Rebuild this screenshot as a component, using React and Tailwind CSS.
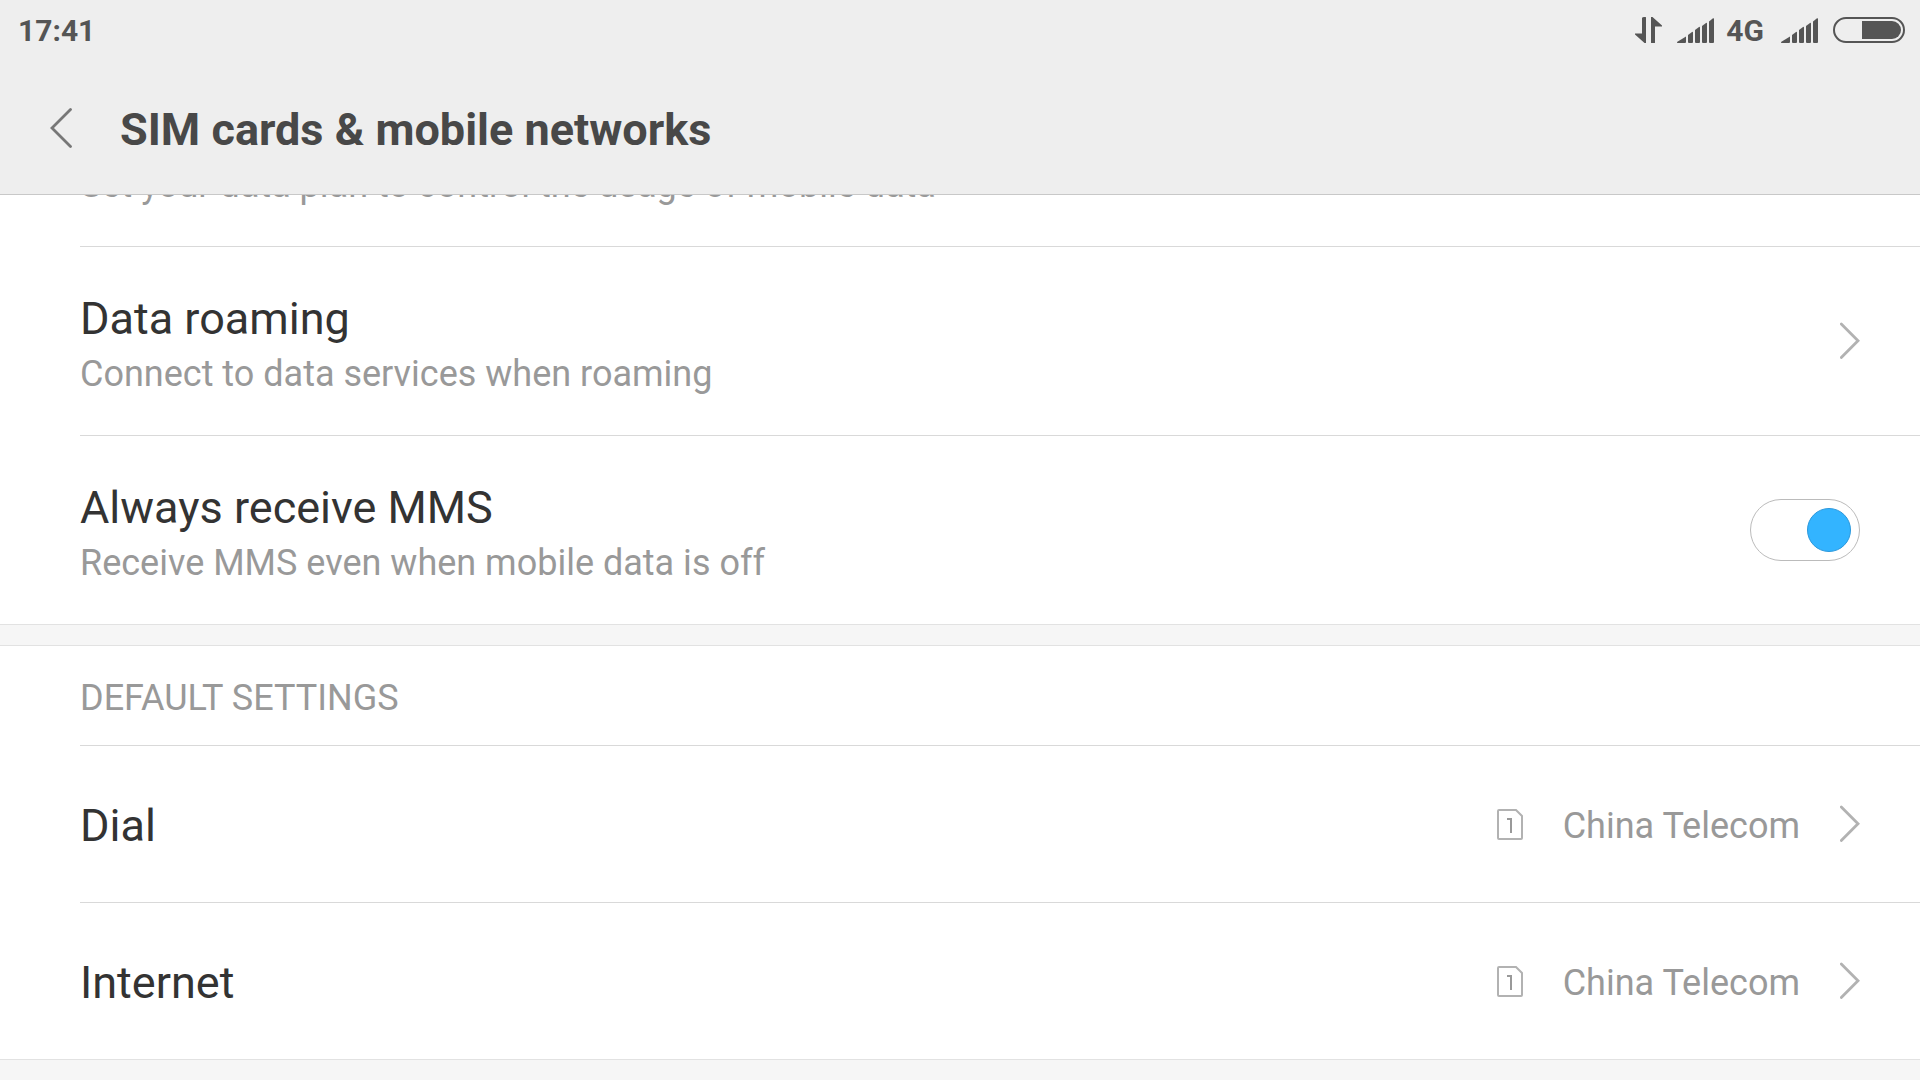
import React, { useState } from "react";

function DataArrows() {
  return (
    <svg viewBox="0 0 27 26" className="h-[26px] w-[27px] fill-[#555]" aria-hidden="true">
      <path d="M8 0.5Q8 0 8.500 0H10.500Q11 0 11 0.500V26H9.500L0 17.500V16.500H7V0.500Z" />
      <path d="M16 0H17.500L27 8.500V9.500H20V25.500Q20 26 19.500 26H16.500Q16 26 16 25.500Z" />
    </svg>
  );
}

function Signal() {
  return (
    <svg viewBox="0 0 37 25" className="h-[25px] w-[37px] fill-[#555]" aria-hidden="true">
      <path d="M0 24L9 18.500V24Q9 25 8 25H0.500Q0 25 0 24Z" />
      <path d="M11 17L15 14Q16 13.500 16 14.500V24Q16 25 15 25H12Q11 25 11 24Z" />
      <path d="M18 12L22 9Q23 8.500 23 9.500V24Q23 25 22 25H19Q18 25 18 24Z" />
      <path d="M25 8L29 5Q30 4.500 30 5.500V24Q30 25 29 25H26Q25 25 25 24Z" />
      <path d="M32 3.500L36 0.300Q37 0 37 1V24Q37 25 36 25H33Q32 25 32 24Z" />
    </svg>
  );
}

function Battery() {
  return (
    <svg viewBox="0 0 72 26" className="h-[26px] w-[72px]" aria-hidden="true">
      <rect x="1" y="1" width="70" height="24" rx="12" fill="none" stroke="#555" strokeWidth="2" />
      <path d="M29 4H59A9 9 0 0 1 59 22H29Z" fill="#555" />
    </svg>
  );
}

function Chevron() {
  return (
    <svg viewBox="0 0 20 38" className="h-[38px] w-5 shrink-0" fill="none" stroke="#b2b2b2" strokeWidth="2.8" strokeLinecap="round" aria-hidden="true">
      <path d="M1.300 2L18 18.700L1.300 35.500" />
    </svg>
  );
}

function SimIcon() {
  return (
    <svg viewBox="0 0 26 31" className="h-[31px] w-[26px] shrink-0" fill="none" aria-hidden="true">
      <path d="M2 1H19L25 7V29Q25 30 24 30H2Q1 30 1 29V2Q1 1 2 1Z" stroke="#b2b2b2" strokeWidth="2" />
      <path d="M10 10H14V24" stroke="#999" strokeWidth="2" />
    </svg>
  );
}

function RowText({ title, note }) {
  return (
    <span className="flex flex-1 flex-col pt-[42px] pb-9">
      <span className="text-[45px] leading-[60px] text-[#333]">{title}</span>
      <span className="text-4xl leading-[50px] text-[#999]">{note}</span>
    </span>
  );
}

function SimRow({ title, last }) {
  return (
    <li className={last ? "pl-20" : "ml-20 border-b border-[#d9d9d9]"}>
      <button type="button" className="flex w-full items-center pr-[60px] text-left">
        <span className="flex-1 pt-[50px] pb-[46px] text-[45px] leading-[60px] text-[#333]">{title}</span>
        <SimIcon />
        <span className="mr-10 ml-10 pt-1 text-4xl leading-[50px] text-[#999]">China Telecom</span>
        <Chevron />
      </button>
    </li>
  );
}

export default function App() {
  const [mms, setMms] = useState(true);
  return (
    <div className="flex min-h-screen flex-col bg-white font-[Roboto,sans-serif]">
      <header className="border-b border-[#c8c8c8] bg-[#eee]">
        <div className="flex h-[60px] items-center justify-between pr-[15px] pl-[18px] text-[30px] leading-[40px] font-bold text-[#555]">
          <time className="pt-0.5">17:41</time>
          <div className="flex items-center">
            <DataArrows />
            <span className="ml-[15px]"><Signal /></span>
            <span className="ml-3 pt-0.5">4G</span>
            <span className="ml-[17px]"><Signal /></span>
            <span className="ml-[15px]"><Battery /></span>
          </div>
        </div>
        <div className="flex items-center pt-9 pb-[34px] pl-[50px]">
          <button type="button" aria-label="Back">
            <svg viewBox="0 0 22 40" className="h-10 w-[22px]" fill="none" stroke="#777" strokeWidth="2.8" strokeLinecap="round" aria-hidden="true">
              <path d="M20.500 1.500L2 20L20.500 38.500" />
            </svg>
          </button>
          <h1 className="ml-12 pt-1 text-[45px] leading-[60px] font-bold text-[#484848]">SIM cards &amp; mobile networks</h1>
        </div>
      </header>

      <main className="flex flex-1 flex-col">
        <ul>
          <li className="ml-20 flex h-[52px] flex-col justify-end overflow-hidden border-b border-[#d9d9d9] pb-9">
            <p className="shrink-0 text-4xl leading-[50px] text-[#999]">Set your data plan to control the usage of mobile data</p>
          </li>
          <li className="ml-20 border-b border-[#d9d9d9]">
            <button type="button" className="flex w-full items-center pr-[60px] text-left">
              <RowText title="Data roaming" note="Connect to data services when roaming" />
              <Chevron />
            </button>
          </li>
          <li className="pl-20">
            <label className="flex items-center pr-[60px]">
              <RowText title="Always receive MMS" note="Receive MMS even when mobile data is off" />
              <input
                type="checkbox"
                role="switch"
                checked={mms}
                onChange={(e) => setMms(e.target.checked)}
                className="flex h-[62px] w-[110px] shrink-0 appearance-none items-center rounded-full border border-[#bbb] bg-white px-2 before:size-11 before:rounded-full before:border before:border-[#bbb] before:bg-[#ddd] before:content-[''] checked:justify-end checked:before:border-[#2b98dc] checked:before:bg-[#33b4ff]"
              />
            </label>
          </li>
        </ul>

        <div className="h-[22px] border-y border-[#e2e2e2] bg-[#f6f6f6]" />

        <section>
          <h2 className="ml-20 border-b border-[#d9d9d9] pt-[27px] pb-[22px] text-4xl leading-[50px] text-[#999]">DEFAULT SETTINGS</h2>
          <ul>
            <SimRow title="Dial" />
            <SimRow title="Internet" last />
          </ul>
        </section>

        <div className="flex-1 border-t border-[#e2e2e2] bg-[#f6f6f6]" />
      </main>
    </div>
  );
}
